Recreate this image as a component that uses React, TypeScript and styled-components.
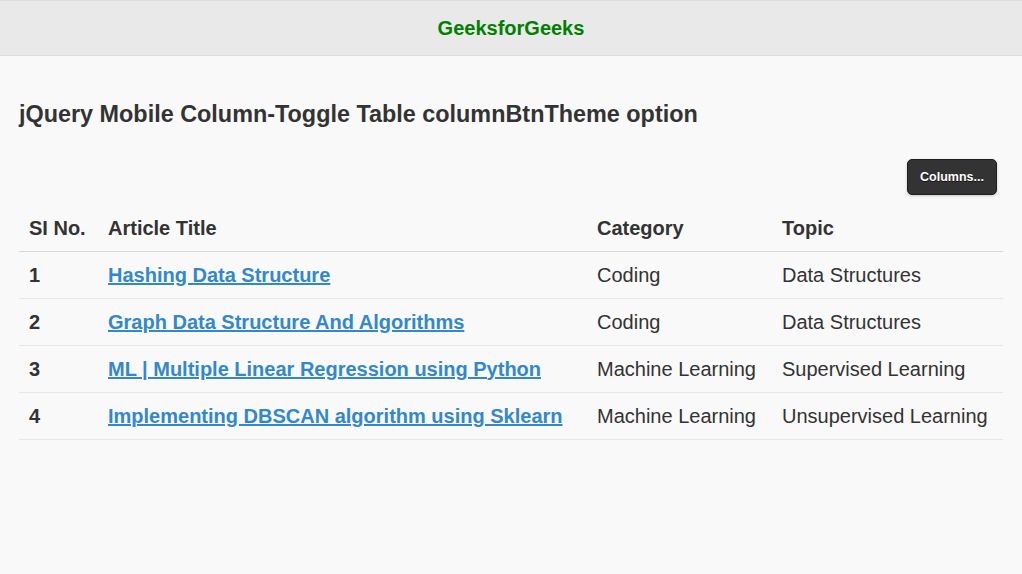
import styled, { createGlobalStyle } from "styled-components";

const GlobalStyle = createGlobalStyle`
  html, body {
    margin: 0;
    padding: 0;
    background: #f9f9f9;
    font-family: "Liberation Sans", Arial, sans-serif;
    color: #333;
  }
`;

type Row = {
  no: number;
  title: string;
  category: string;
  topic: string;
};

const rows: Row[] = [
  { no: 1, title: "Hashing Data Structure", category: "Coding", topic: "Data Structures" },
  { no: 2, title: "Graph Data Structure And Algorithms", category: "Coding", topic: "Data Structures" },
  { no: 3, title: "ML | Multiple Linear Regression using Python", category: "Machine Learning", topic: "Supervised Learning" },
  { no: 4, title: "Implementing DBSCAN algorithm using Sklearn", category: "Machine Learning", topic: "Unsupervised Learning" },
];

function App() {
  return (
    <Page>
      <GlobalStyle />
      <Header>
        <HeaderTitle>GeeksforGeeks</HeaderTitle>
      </Header>
      <Content>
        <Heading>jQuery Mobile Column-Toggle Table columnBtnTheme option</Heading>
        <ButtonBar>
          <ColumnsButton>Columns...</ColumnsButton>
        </ButtonBar>
        <Table>
          <colgroup>
            <col style={{ width: 79 }} />
            <col style={{ width: 489 }} />
            <col style={{ width: 185 }} />
            <col />
          </colgroup>
          <thead>
            <tr>
              <Th>SI No.</Th>
              <Th>Article Title</Th>
              <Th>Category</Th>
              <Th>Topic</Th>
            </tr>
          </thead>
          <tbody>
            {rows.map((r) => (
              <tr key={r.no}>
                <Td $bold>{r.no}</Td>
                <Td>
                  <ArticleLink href="#">{r.title}</ArticleLink>
                </Td>
                <Td>{r.category}</Td>
                <Td>{r.topic}</Td>
              </tr>
            ))}
          </tbody>
        </Table>
      </Content>
    </Page>
  );
}

const Page = styled.div`
  min-height: 574px;
  background: #f9f9f9;
`;

const Header = styled.header`
  height: 56px;
  box-sizing: border-box;
  background: #e9e9e9;
  border-top: 1px solid #dddddd;
  border-bottom: 1px solid #dddddd;
  display: flex;
  align-items: center;
  justify-content: center;
`;

const HeaderTitle = styled.h1`
  margin: 0;
  font-size: 20px;
  font-weight: 700;
  color: #008000;
`;

const Content = styled.main`
  padding: 0 19px;
`;

const Heading = styled.h2`
  margin: 43px 0 0;
  font-size: 23.4px;
  line-height: 30px;
  font-weight: 700;
  color: #333;
`;

const ButtonBar = styled.div`
  display: flex;
  justify-content: flex-end;
  margin-top: 30px;
  padding-right: 6px;
`;

const ColumnsButton = styled.button`
  width: 90px;
  height: 36px;
  background: #333333;
  border: 1px solid #1f1f1f;
  border-radius: 5px;
  box-shadow: 0 1px 3px rgba(0, 0, 0, 0.2);
  color: #ffffff;
  font-family: "Liberation Sans", Arial, sans-serif;
  font-size: 12.5px;
  font-weight: 700;
  text-shadow: 0 1px 0 #111;
  cursor: pointer;
  padding: 0;
`;

const Table = styled.table`
  width: 100%;
  margin-top: 10px;
  border-collapse: collapse;
  table-layout: fixed;
  font-size: 20px;
`;

const Th = styled.th`
  height: 46px;
  padding: 0 0 0 10px;
  text-align: left;
  font-weight: 700;
  border-bottom: 1px solid #d8d8d8;
  white-space: nowrap;
`;

const Td = styled.td<{ $bold?: boolean }>`
  height: 46px;
  padding: 0 0 0 10px;
  font-weight: ${(p) => (p.$bold ? 700 : 400)};
  border-bottom: 1px solid #e6e6e6;
  white-space: nowrap;
`;

const ArticleLink = styled.a`
  color: #3388cc;
  font-weight: 700;
  text-decoration: underline;
`;

export default App;
